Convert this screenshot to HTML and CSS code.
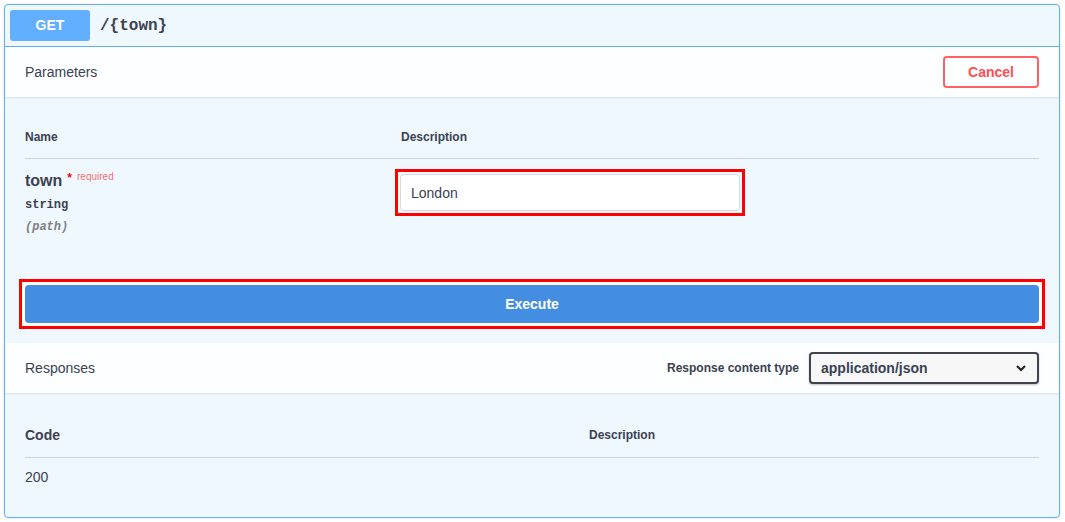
FILE: index.html
```html
<!DOCTYPE html>
<html>
<head>
<meta charset="utf-8">
<link rel="stylesheet" href="styles.css">
</head>
<body>
<div class="opblock">
  <div class="summary">
    <span class="method">GET</span>
    <span class="path">/{town}</span>
  </div>
  <div class="section-header">
    <h4 class="title">Parameters</h4>
    <button class="btn-cancel">Cancel</button>
  </div>
  <div class="params">
    <div class="prow phead">
      <div class="col-name">Name</div>
      <div class="col-desc">Description</div>
    </div>
    <div class="prow pbody">
      <div class="col-name">
        <div class="pname">town<span class="star">*</span><span class="req">required</span></div>
        <div class="ptype">string</div>
        <div class="pin">(path)</div>
      </div>
      <div class="col-desc">
        <div class="hl-input">
          <input class="pinput" type="text" value="London">
        </div>
      </div>
    </div>
  </div>
  <div class="execute-wrapper">
    <div class="hl-exec">
      <button class="btn-execute">Execute</button>
    </div>
  </div>
  <div class="section-header">
    <h4 class="title">Responses</h4>
    <div class="ctype">
      <span class="ctype-label">Response content type</span>
      <div class="select">
        <span>application/json</span>
        <svg width="12" height="8" viewBox="0 0 12 8"><path d="M2 2 L6 6 L10 2" fill="none" stroke="#202020" stroke-width="2"/></svg>
      </div>
    </div>
  </div>
  <div class="responses">
    <div class="rrow rhead">
      <div class="rcode">Code</div>
      <div class="rdesc">Description</div>
    </div>
    <div class="rrow rbody">
      <div class="rcode">200</div>
      <div class="rdesc"></div>
    </div>
  </div>
</div>
</body>
</html>
```
FILE: styles.css
```css
html, body { margin: 0; padding: 0; background: #fff; }
body { padding: 4px 5px 4px 4px; font-family: "Liberation Sans", Arial, sans-serif; color: #3b4151; }
.opblock {
  border: 1px solid #61affe;
  border-radius: 4px;
  background: #eff7ff;
  box-shadow: 0 0 3px rgba(0,0,0,.12);
  height: 514px;
  box-sizing: border-box;
}
.summary {
  display: flex; align-items: center;
  padding: 5px;
  border-bottom: 1px solid #61affe;
}
.method {
  width: 80px; height: 31px; line-height: 31px;
  background: #61affe; color: #fff; border-radius: 3px;
  font-weight: bold; font-size: 14px; text-align: center;
}
.path {
  font-family: "Liberation Mono", "Courier New", monospace;
  font-weight: bold; font-size: 16px; padding: 0 10px; color: #3b4151;
}
.section-header {
  display: flex; align-items: center; justify-content: space-between;
  height: 50px; box-sizing: border-box;
  padding: 0 20px;
  background: rgba(255,255,255,.8);
  box-shadow: 0 1px 2px rgba(0,0,0,.1);
}
.title { margin: 0; font-size: 14px; font-weight: normal; color: #3b4151; }
.btn-cancel {
  width: 96px; height: 32px;
  border: 2px solid #ff6060; border-radius: 4px; background: transparent;
  color: #ff4f4f; font-family: inherit; font-weight: bold; font-size: 14px;
}
.params { padding: 20px 20px 0; }
.prow { display: grid; grid-template-columns: 376px 1fr; }
.phead {
  font-size: 12px; font-weight: bold; line-height: 16px;
  padding: 12px 0 13px;
  border-bottom: 1px solid rgba(59,65,81,.2);
}
.pbody { height: 106px; padding-top: 12px; box-sizing: border-box; }
.pname { font-size: 16px; font-weight: bold; line-height: 20px; }
.star { color: #f00; font-size: 12px; position: relative; top: -4px; margin-left: 5px; }
.req { color: rgba(255,0,0,.6); font-size: 10px; font-weight: normal; position: relative; top: -6px; margin-left: 5px; }
.ptype {
  font-family: "Liberation Mono", "Courier New", monospace; font-weight: bold; font-size: 12px;
  margin-top: 5px; line-height: 15px;
}
.pin {
  font-family: "Liberation Mono", "Courier New", monospace; font-weight: bold; font-style: italic;
  font-size: 12px; color: #808080; margin-top: 7px; line-height: 15px;
}
.hl-input {
  display: inline-block;
  margin: 0 0 0 -6px;
  border: 3px solid #f00;
  padding: 2px;
  position: relative; top: -2px;
}
.pinput {
  display: block; width: 340px; height: 37px; box-sizing: border-box;
  padding: 8px 10px; border: 1px solid #d9d9d9; border-radius: 4px; background: #fff;
  font-family: inherit; font-size: 14px; color: #3b4151;
}
.execute-wrapper { padding: 20px; }
.hl-exec {
  margin: -6px;
  border: 3px solid #f00;
  padding: 3px;
  background: #fff;
}
.btn-execute {
  display: block; width: 100%; height: 38px;
  background: #438ee2; border: none; border-radius: 4px;
  color: #fff; font-family: inherit; font-weight: bold; font-size: 14px;
}
.ctype { display: flex; align-items: center; }
.ctype-label { font-size: 12px; font-weight: bold; margin-right: 10px; }
.select {
  display: flex; align-items: center; justify-content: space-between;
  width: 230px; height: 32px; box-sizing: border-box; padding: 0 10px;
  border: 2px solid #41444e; border-radius: 4px; background: #f7f7f7;
  font-size: 14px; font-weight: bold; color: #3b4151;
  box-shadow: 0 1px 2px rgba(0,0,0,.25);
}
.responses { padding: 20px 20px 0; }
.rrow { display: grid; grid-template-columns: 564px 1fr; }
.rhead {
  padding: 14px 0 14px; line-height: 16px;
  border-bottom: 1px solid rgba(59,65,81,.2);
}
.rhead .rcode { font-size: 14px; font-weight: bold; }
.rhead .rdesc { font-size: 12px; font-weight: bold; }
.rbody { padding-top: 11px; font-size: 14px; line-height: 16px; }
```
